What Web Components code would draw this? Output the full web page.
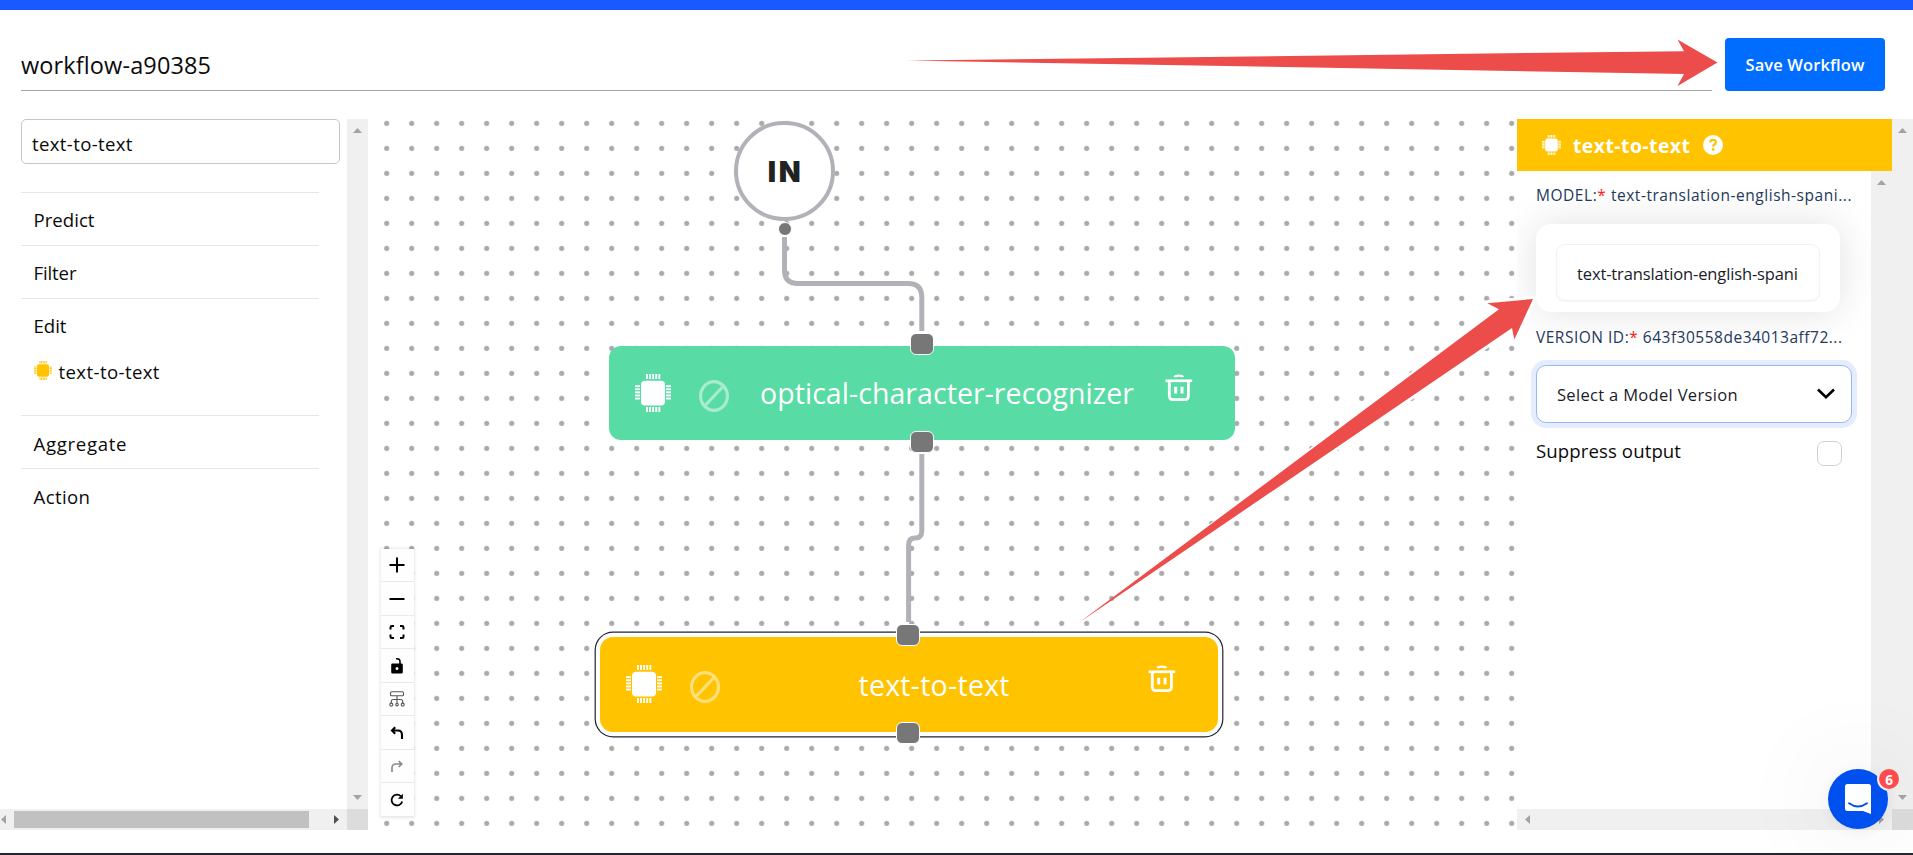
<!DOCTYPE html>
<html lang="en">
<head>
<meta charset="utf-8">
<title>Workflow editor</title>
<style>
html,body{margin:0;height:100%;overflow:hidden;background:#fff}
body{font-family:"Open Sans","Noto Sans",sans-serif;color:#0b0b0b}
</style>
</head>
<body>
<workflow-app></workflow-app>
<script>
const define = (name, html, after) => customElements.define(name, class extends HTMLElement {
  connectedCallback() {
    if (this.shadowRoot) return;
    const root = this.attachShadow({ mode: 'open' });
    root.innerHTML = typeof html === 'function' ? html(this) : html;
    if (after) after(this, root);
  }
});

/* One line of text whose tracking is adjusted to fill the width in "w". */
define('fit-text', `<style>:host{display:inline-block;white-space:pre;flex:none}span{display:inline-block}</style><span><slot></slot></span>`,
  (el, root) => {
    const w = parseFloat(el.getAttribute('w')), span = root.querySelector('span');
    const n = el.textContent.length;
    if (!w) return;
    const gap = (w - span.getBoundingClientRect().width) / (n - 1);
    span.style.letterSpacing = gap + 'px';
    span.style.marginRight = -gap + 'px';
  });

define('chip-icon', () => {
  let t = '';
  for (let i = 0; i < 5; i++) {
    const p = 11.2 + i * 3.1;
    t += `<rect x="${p - .2}" y="0" width="1.9" height="5"/><rect x="${p - .2}" y="33" width="1.9" height="5"/>`;
    t += `<rect x="0" y="${p}" width="5" height="1.9"/><rect x="31" y="${p}" width="5" height="1.9"/>`;
  }
  return `<style>:host{display:block;width:36px;height:38px;flex:none}svg{display:block;width:100%;height:100%}</style>
  <svg viewBox="0 0 36 38" fill="currentColor"><rect x="6" y="6.7" width="24" height="24.8" rx="4"/>${t}</svg>`;
});

define('ban-icon', `<style>:host{display:block;width:30px;height:32px;opacity:.48;flex:none}svg{display:block}</style>
<svg width="30" height="32" fill="none" stroke="#fff" stroke-width="3.2"><ellipse cx="15" cy="16" rx="13.4" ry="14.4"/><path d="M5.6 26L24.4 6"/></svg>`);

define('trash-icon', `<style>:host{display:block;width:28px;height:28px;flex:none}svg{display:block}</style>
<svg width="28" height="28" fill="none" stroke="#fff"><path d="M.5 6.800H27.200" stroke-width="2.700"/><path d="M9.600 3.100Q10 1.600 13.800 1.600T18 3.100" stroke-width="2.300"/><path d="M4.300 8V22Q4.300 25.700 8 25.700H19.800Q23.400 25.700 23.400 22V8" stroke-width="2.800"/><path d="M10.700 12.800V19.600M17 12.800V19.600" stroke-width="3"/></svg>`);

define('scroll-bar', el => {
  const v = el.hasAttribute('vertical'), end = el.getAttribute('end') || '#a3a3a3';
  const a = (d, c) => `<svg width="9" height="9" fill="${c}"><path d="${d}"/></svg>`;
  return `<style>:host{display:flex;box-sizing:border-box;background:#f0f0f0;align-items:center;justify-content:space-between;
   ${v ? 'flex-direction:column;width:21px;padding:7px 0 7px' : 'height:21px;padding:0 var(--pe,7px) 0 var(--ps,7px)'}}
   svg{display:block;flex:none}slot{display:flex;flex:1}</style>
   ${v ? a('M0 7L4.5 2L9 7Z', '#a3a3a3') : a('M6 0L1 4.5L6 9Z', '#a3a3a3')}<slot></slot>${v ? a('M0 2L4.5 7L9 2Z', end) : a('M3 0L8 4.5L3 9Z', end)}`;
});

define('title-bar', `<style>
:host{display:flex;height:109px;box-sizing:border-box;padding:28px 28px 0 21px;align-items:flex-start}
.name{flex:1;height:53px;box-sizing:border-box;border-bottom:1px solid #a6a6a6;font-size:23.5px;line-height:54px;margin-right:13px}
button{width:160px;height:53px;border:0;border-radius:4px;background:#006dff;color:#fff;padding:0;font:600 16.5px/54px "Open Sans",sans-serif}
</style><div class="name"><fit-text w="190">workflow-a90385</fit-text></div><button><fit-text w="119">Save Workflow</fit-text></button>`);

define('side-category', `<style>
:host{display:block;border-top:1px solid #e6e6e6;width:298px;height:53px;box-sizing:border-box;font-size:18.6px}
:host([open]){height:117px}
.t{padding-left:12.500px;line-height:54px;height:52px}
</style><div class="t"><slot name="title"></slot></div><slot></slot>`);

define('operator-item', `<style>:host{display:flex;padding-left:13px;height:36px;line-height:36px;margin-top:2.500px}chip-icon{width:18px;height:19px;color:#ffc300;margin:7px 6.500px 0 0}</style><chip-icon></chip-icon><slot></slot>`);

define('operator-list', `<style>
:host{display:grid;grid-template:690px 21px / 347px 21px;width:368px;height:711px}
.list{padding-left:21px}
.search{width:319px;height:45px;box-sizing:border-box;border:1px solid #c6c6c6;border-radius:5px;padding-left:10px;font-size:18.6px;line-height:47px;margin-bottom:28px}
.low{line-height:55px}
.corner{background:#dcdcdc}
.thumb{flex:1;height:17px;background:#c1c1c1;margin:0 22px 0 5px}
.h{--ps:0px;--pe:7px}
</style>
<div class="list"><div class="search"><fit-text w="100.5">text-to-text</fit-text></div>
<side-category><fit-text slot="title" w="61">Predict</fit-text></side-category>
<side-category><fit-text slot="title" w="43">Filter</fit-text></side-category>
<side-category open><fit-text slot="title" w="33">Edit</fit-text><operator-item><fit-text w="101">text-to-text</fit-text></operator-item></side-category>
<side-category><fit-text class="low" slot="title" w="93">Aggregate</fit-text></side-category>
<side-category><fit-text class="low" slot="title" w="56.5">Action</fit-text></side-category></div>
<scroll-bar vertical></scroll-bar><scroll-bar class="h" end="#505050"><div class="thumb"></div></scroll-bar><div class="corner"></div>`);

define('node-handle', `<style>:host{position:absolute;width:22px;height:20px;border-radius:6px;background:#777;border:1.5px solid #fff;transform:translate(-50%,-50%);left:var(--x);top:var(--y)}</style>`);

define('flow-node', `<style>
:host{position:absolute;display:flex;box-sizing:border-box;border-radius:12px;color:#fff;background:var(--c);font-size:28.5px;line-height:40px}
:host([selected]){box-shadow:0 0 0 4.2px #fff,0 0 0 5.4px #22222f;border-radius:13px}
chip-icon{margin:28px 0 0 26px}ban-icon{margin:34px 0 0 28px}
.l{flex:1;text-align:center;padding:var(--t,27px) 1px 0 0;margin-right:-1px}trash-icon{margin:28px 42px 0 0}
</style><chip-icon></chip-icon><ban-icon></ban-icon><div class="l"><slot></slot></div><trash-icon></trash-icon>`);

define('canvas-controls', () => {
  const icons = [
    '<path d="M9 1.5V16.5M1.5 9H16.5" stroke-width="2"/>',
    '<path d="M1.5 9H16.5" stroke-width="2"/>',
    '<path d="M2.5 6.5V4.4Q2.5 3 4 3H6M12 3H14Q15.500 3 15.500 4.400V6.500M15.500 11.500V13.500Q15.500 15 14 15H12M6 15H4Q2.500 15 2.500 13.500V11.500" stroke-width="2"/>',
    '<path d="M8 1.800Q12 1.300 12 4.500V7" stroke-width="1.600"/><path d="M4.500 6.500H13.500Q14.800 6.500 14.800 7.800V15.200Q14.800 16.500 13.500 16.500H4.500Q3.200 16.500 3.200 15.200V7.800Q3.200 6.500 4.500 6.500ZM9 10A1.500 1.500 0 1 0 9 13A1.500 1.500 0 1 0 9 10Z" fill="#000" fill-rule="evenodd" stroke="none"/>',
    '<g stroke="#555" stroke-width="1.100"><rect x="2.500" y="1.800" width="13" height="4" rx="1.300"/><path d="M9 6V13M3.300 13V11.500Q3.300 9.500 5.200 9.500H12.800Q14.700 9.500 14.700 11.500V13"/><circle cx="3.300" cy="14.600" r="1.500"/><circle cx="9" cy="14.600" r="1.300"/><circle cx="14.700" cy="14.600" r="1.500"/></g>',
    '<path d="M14 15V11Q14 6.500 10 6.500H4.500M7.200 3.300L4 6.500L7.200 9.700" stroke-width="2.100"/>',
    '<path d="M4 15V11Q4 7 8 7H13.500M10.700 4L13.700 7L10.700 10" stroke="#8b8b8b" stroke-width="1.700"/>',
    '<path d="M14.200 10.500A5.400 5.400 0 1 1 12.800 5.200" stroke-width="1.800"/><path d="M14.900 2.800V7.800H9.900Z" fill="#000" stroke="none"/>'];
  return `<style>:host{position:absolute;left:13px;top:429.5px;width:32.5px;display:grid;grid-template-rows:repeat(8,33.5px);background:#fefefe;box-shadow:0 0 3px 1px rgba(0,0,0,.09)}
  div{display:grid;place-items:center;border-bottom:1px solid #eaeaea;box-sizing:border-box;padding:1px 1px 0 0}svg{display:block}</style>` +
  icons.map(i => `<div><svg width="18" height="18" fill="none" stroke="#000">${i}</svg></div>`).join('');
});

define('flow-canvas', `<style>
:host{display:block;position:relative;overflow:hidden;flex:1;height:711px;
 background:radial-gradient(circle at 12.5px 12.5px,#aaa 2.1px,rgba(170,170,170,0) 3.1px) 6.2px -8.1px/25px 25px}
.edges{position:absolute;left:0;top:0}
.in{position:absolute;left:366px;top:1.500px;width:92.500px;height:92.500px;border:4px solid #b1b1b7;border-radius:50%;background:#fff;display:grid;place-items:center;font:900 28.500px/44px Inter,sans-serif;color:#222}
.in fit-text{padding-top:3px}
.dot{position:absolute;left:409.500px;top:102.500px;width:12px;height:12px;border-radius:50%;background:#777;border:1.500px solid #fff}
.a{left:241px;top:227px;width:626px;height:94px;--c:#58dba5}
.b{left:232px;top:518px;width:618px;height:95px;--c:#ffc300;--t:28px}
</style>
<svg class="edges" width="1149" height="711" fill="none" stroke="#b1b1b7" stroke-width="5">
<path d="M416.500 118V151Q416.500 164.500 430 164.500H540Q553.800 164.500 553.800 178V212"/>
<path d="M553.800 335V412Q553.800 419 547.200 419T540.600 426V503"/></svg>
<div class="in"><fit-text w="33">IN</fit-text></div><div class="dot"></div>
<flow-node class="a"><fit-text w="374">optical-character-recognizer</fit-text></flow-node>
<flow-node class="b" selected><fit-text w="151">text-to-text</fit-text></flow-node>
<node-handle style="--x:553.500px;--y:224.700px"></node-handle><node-handle style="--x:553.500px;--y:322.500px"></node-handle>
<node-handle style="--x:540.400px;--y:516.400px"></node-handle><node-handle style="--x:540.400px;--y:614.200px"></node-handle>
<canvas-controls></canvas-controls>`);

define('field-label', `<style>:host{display:block;font-size:15.500px;line-height:25px;height:24px;color:#24385a}::slotted(fit-text){vertical-align:top}</style><slot></slot>`);

define('node-settings', `<style>
:host{display:grid;grid-template:52px 638px 21px / 354px 21px 21px;width:396px;height:711px}
i{font-style:normal;color:#f22}
header{grid-area:1/1/2/3;background:#ffc300;color:#fff;display:flex;font:700 19.500px/52px "Open Sans",sans-serif}
header chip-icon{width:19px;height:20px;margin:16px 12px 0 25px}
header svg{display:block;margin:16px 0 0 13px}header fit-text{padding-top:1px}
.outer{grid-area:1/3/3/4}.inner{grid-area:2/2/3/3}.bottom{grid-area:3/1/4/3}.corner{grid-area:3/3/4/4;background:#dcdcdc}
.form{grid-area:2/1/3/2;padding:12px 18px 0 19px;overflow:hidden;background:#fff}
.card{width:304px;height:88px;box-sizing:border-box;padding:20px;margin:17px 0 13px;border-radius:15px;background:#fff;box-shadow:0 0 42px rgba(0,0,0,.12)}
.combo{height:57px;width:264px;box-sizing:border-box;border:1px solid #f1f1f6;border-radius:9px;padding:0 20px;font:500 16.500px/57px "Open Sans",sans-serif;box-shadow:0 1px 2px rgba(0,0,0,.05);color:#1b1b2a}
.select{width:316px;height:58px;box-sizing:border-box;border:1px solid #98b7f8;border-radius:10px;box-shadow:0 0 0 5px #e4ecfd;margin-top:16px;padding:0 16px 0 20px;display:flex;justify-content:space-between;align-items:center;background:#fff;font:500 16.500px/59px "Open Sans",sans-serif;color:#1b1b2a}
.row{display:flex;justify-content:space-between;width:306px;font-size:18.600px;margin-top:18px;line-height:20px}
.check{width:25px;height:25px;box-sizing:border-box;border:1px solid #cfcfda;border-radius:7px}
</style>
<header><chip-icon></chip-icon><fit-text w="117">text-to-text</fit-text><svg width="20" height="20"><circle cx="10" cy="10" r="10" fill="#fff"/><path d="M7.200 7.300Q7.400 4.900 10 4.900Q12.900 4.900 12.900 7.300Q12.900 8.800 11.200 9.700Q10.200 10.300 10.200 11.700" fill="none" stroke="#ffc300" stroke-width="2.200"/><circle cx="10.200" cy="14.500" r="1.400" fill="#ffc300"/></svg></header>
<div class="form">
<field-label><fit-text w="315.500">MODEL:<i>*</i> text-translation-english-spani...</fit-text></field-label>
<div class="card"><div class="combo"><fit-text w="221">text-translation-english-spani</fit-text></div></div>
<field-label><fit-text w="306">VERSION ID:<i>*</i> 643f30558de34013aff72...</fit-text></field-label>
<div class="select"><fit-text w="180.500">Select a Model Version</fit-text><svg width="18" height="12" fill="none" stroke="#000" stroke-width="2.600"><path d="M1 1.500L9 9.200L17 1.500"/></svg></div>
<div class="row"><fit-text w="145">Suppress output</fit-text><div class="check"></div></div>
</div>
<scroll-bar class="inner" vertical></scroll-bar><scroll-bar class="outer" vertical></scroll-bar><scroll-bar class="bottom"></scroll-bar><div class="corner"></div>`);

define('chat-launcher', `<style>
:host{position:absolute;left:1828px;top:769px;width:60px;height:60px;border-radius:50%;box-shadow:0 2px 12px rgba(0,0,0,.06),0 0 100px 10px rgba(0,0,0,.07)}
svg{display:block;position:absolute;left:0;top:0}
.b{position:absolute;left:51px;top:0;width:20px;height:20px;border-radius:50%;background:#ff4b4b;color:#fff;text-align:center;font:700 13.500px/22px "Open Sans",sans-serif}
</style><svg width="60" height="60"><defs><mask id="m"><rect width="60" height="60" fill="#fff"/><circle cx="61" cy="10" r="12" fill="#000"/></mask></defs><circle cx="30" cy="30" r="30" fill="#0050f0" mask="url(#m)"/>
<path d="M19.500 15H40.500Q43 15 43 17.500V45L35 42H19.500Q17 42 17 39.500V17.500Q17 15 19.500 15Z" fill="#fff"/><path d="M21 34.300Q30 40.800 39 34.300" fill="none" stroke="#0050f0" stroke-width="1.900" stroke-linecap="round"/></svg><div class="b">6</div>`);

define('pointer-arrows', `<style>:host{position:absolute;left:0;top:0;pointer-events:none}svg{display:block}</style>
<svg width="1913" height="855"><g fill="none" stroke="#fff" stroke-width="6" stroke-linejoin="round"><path d="M1130 588L1499 309.300L1487.300 303.300L1533 299L1514.300 339.500L1512 328Z"/></g><g fill="#ec4d4b"><path d="M907 60.500L1684 51.200L1677.500 39.500L1717.500 62.500L1677.500 86L1684 74Z"/>
<path d="M1078.500 623L1499 309.300L1487.300 303.300L1533 299L1514.300 339.500L1512 328Z"/></g></svg>`);

define('workflow-app', `<style>
:host{display:flex;flex-direction:column;position:relative;height:855px;width:1913px;box-sizing:border-box;border-top:10px solid #185aff;border-bottom:2px solid #24252f;overflow:hidden}
main{display:flex;height:711px}
.over{position:absolute;left:0;top:-10px;width:1913px;height:853px}
</style><title-bar></title-bar><main><operator-list></operator-list><flow-canvas></flow-canvas><node-settings></node-settings></main>
<div class="over"><chat-launcher></chat-launcher><pointer-arrows></pointer-arrows></div>`);
</script>
</body>
</html>
